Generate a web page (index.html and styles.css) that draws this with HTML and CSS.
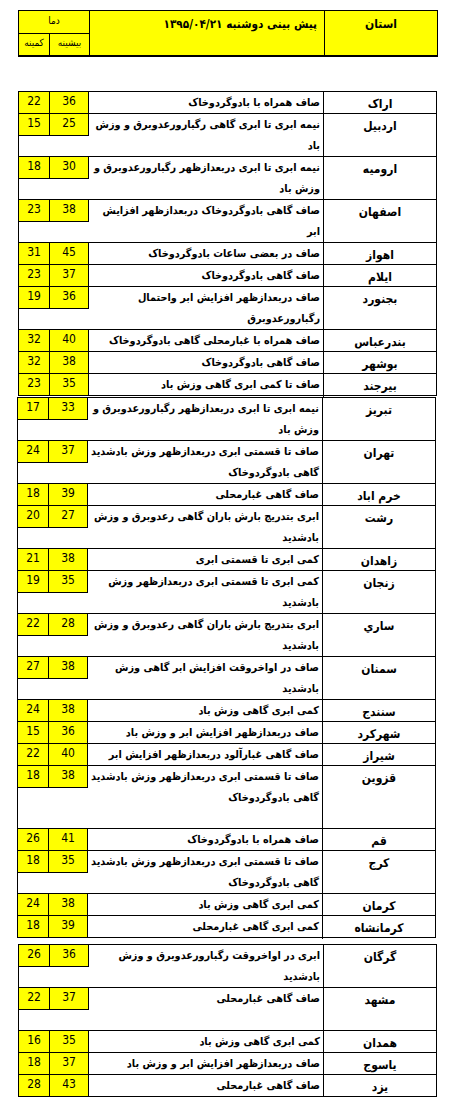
FILE: index.html
```html
<!DOCTYPE html>
<html lang="fa">
<head>
<meta charset="utf-8">
<title>پیش بینی</title>
<link rel="stylesheet" href="styles.css">
</head>
<body>
<div class="page">
  <div class="head">
    <div class="h-prov">استان</div>
    <div class="h-desc">پیش بینی دوشنبه ۱۳۹۵/۰۴/۲۱</div>
    <div class="h-temp">
      <div class="h-dama">دما</div>
      <div class="h-sub"><div class="h-max">بیشینه</div><div class="h-min">کمینه</div></div>
    </div>
  </div>

  <div class="block blk-a">
    <div class="row r1"><div class="prov">اراک</div><div class="desc">صاف همراه با بادوگردوخاک</div><div class="t">36</div><div class="t">22</div></div>
    <div class="row r2"><div class="prov">اردبیل</div><div class="desc">نیمه ابری تا ابری گاهی رگبارورعدوبرق و وزش<br>باد</div><div class="t">25</div><div class="t">15</div></div>
    <div class="row r2"><div class="prov">ارومیه</div><div class="desc">نیمه ابری تا ابری دربعدازظهر رگبارورعدوبرق و<br>وزش باد</div><div class="t">30</div><div class="t">18</div></div>
    <div class="row r2"><div class="prov">اصفهان</div><div class="desc">صاف گاهی بادوگردوخاک دربعدازظهر افزایش<br>ابر</div><div class="t">38</div><div class="t">23</div></div>
    <div class="row r1"><div class="prov">اهواز</div><div class="desc">صاف در بعضی ساعات بادوگردوخاک</div><div class="t">45</div><div class="t">31</div></div>
    <div class="row r1"><div class="prov">ایلام</div><div class="desc">صاف گاهی بادوگردوخاک</div><div class="t">37</div><div class="t">23</div></div>
    <div class="row r2"><div class="prov">بجنورد</div><div class="desc">صاف دربعدازظهر افزایش ابر واحتمال<br>رگبارورعدوبرق</div><div class="t">36</div><div class="t">19</div></div>
    <div class="row r1"><div class="prov">بندرعباس</div><div class="desc">صاف همراه با غبارمحلی گاهی بادوگردوخاک</div><div class="t">40</div><div class="t">32</div></div>
    <div class="row r1"><div class="prov">بوشهر</div><div class="desc">صاف گاهی بادوگردوخاک</div><div class="t">38</div><div class="t">32</div></div>
    <div class="row r1"><div class="prov">بیرجند</div><div class="desc">صاف تا کمی ابری گاهی وزش باد</div><div class="t">35</div><div class="t">23</div></div>
  </div>

  <div class="block blk-b">
    <div class="row r2"><div class="prov">تبریز</div><div class="desc">نیمه ابری تا ابری دربعدازظهر رگبارورعدوبرق و<br>وزش باد</div><div class="t">33</div><div class="t">17</div></div>
    <div class="row r2"><div class="prov">تهران</div><div class="desc">صاف تا قسمتی ابری دربعدازظهر وزش بادشدید<br>گاهی بادوگردوخاک</div><div class="t">37</div><div class="t">24</div></div>
    <div class="row r1"><div class="prov">خرم اباد</div><div class="desc">صاف گاهی غبارمحلی</div><div class="t">39</div><div class="t">18</div></div>
    <div class="row r2"><div class="prov">رشت</div><div class="desc">ابری بتدریج بارش باران گاهی رعدوبرق و وزش<br>بادشدید</div><div class="t">27</div><div class="t">20</div></div>
    <div class="row r1"><div class="prov">زاهدان</div><div class="desc">کمی ابری تا قسمتی ابری</div><div class="t">38</div><div class="t">21</div></div>
    <div class="row r2"><div class="prov">زنجان</div><div class="desc">کمی ابری تا قسمتی ابری دربعدازظهر وزش<br>بادشدید</div><div class="t">35</div><div class="t">19</div></div>
    <div class="row r2"><div class="prov">ساري</div><div class="desc">ابری بتدریج بارش باران گاهی رعدوبرق و وزش<br>بادشدید</div><div class="t">28</div><div class="t">22</div></div>
    <div class="row r2"><div class="prov">سمنان</div><div class="desc">صاف در اواخروقت افزایش ابر گاهی وزش<br>بادشدید</div><div class="t">38</div><div class="t">27</div></div>
    <div class="row r1"><div class="prov">سنندج</div><div class="desc">کمی ابری گاهی وزش باد</div><div class="t">38</div><div class="t">24</div></div>
    <div class="row r1"><div class="prov">شهرکرد</div><div class="desc">صاف دربعدازظهر افزایش ابر و وزش باد</div><div class="t">36</div><div class="t">15</div></div>
    <div class="row r1"><div class="prov">شیراز</div><div class="desc">صاف گاهی غبارآلود دربعدازظهر افزایش ابر</div><div class="t">40</div><div class="t">22</div></div>
    <div class="row r3"><div class="prov">قزوین</div><div class="desc">صاف تا قسمتی ابری دربعدازظهر وزش بادشدید<br>گاهی بادوگردوخاک</div><div class="t">38</div><div class="t">18</div></div>
    <div class="row r1"><div class="prov">قم</div><div class="desc">صاف همراه با بادوگردوخاک</div><div class="t">41</div><div class="t">26</div></div>
    <div class="row r2"><div class="prov">کرج</div><div class="desc">صاف تا قسمتی ابری دربعدازظهر وزش بادشدید<br>گاهی بادوگردوخاک</div><div class="t">35</div><div class="t">18</div></div>
    <div class="row r1"><div class="prov">کرمان</div><div class="desc">کمی ابری گاهی وزش باد</div><div class="t">38</div><div class="t">24</div></div>
    <div class="row r1"><div class="prov">کرمانشاه</div><div class="desc">کمی ابری گاهی غبارمحلی</div><div class="t">39</div><div class="t">18</div></div>
  </div>

  <div class="block blk-c">
    <div class="row r2"><div class="prov">گرگان</div><div class="desc">ابری در اواخروقت رگبارورعدوبرق و وزش<br>بادشدید</div><div class="t">36</div><div class="t">26</div></div>
    <div class="row r2"><div class="prov">مشهد</div><div class="desc">صاف گاهی غبارمحلی</div><div class="t">37</div><div class="t">22</div></div>
    <div class="row r1"><div class="prov">همدان</div><div class="desc">کمی ابری گاهی وزش باد</div><div class="t">35</div><div class="t">16</div></div>
    <div class="row r1"><div class="prov">یاسوج</div><div class="desc">صاف دربعدازظهر افزایش ابر و وزش باد</div><div class="t">37</div><div class="t">18</div></div>
    <div class="row r1"><div class="prov">یزد</div><div class="desc">صاف گاهی غبارمحلی</div><div class="t">43</div><div class="t">28</div></div>
  </div>
</div>
</body>
</html>
```

FILE: styles.css
```css
* {
  box-sizing: border-box;
  margin: 0;
  padding: 0;
}

html, body {
  background: #ffffff;
}

body {
  font-family: "DejaVu Sans Condensed", "DejaVu Sans", sans-serif;
  color: #000000;
}

.page {
  padding-top: 10px;
  width: 450px;
}

/* ---------- header ---------- */
.head {
  width: 420px;
  margin-left: 18px;
  height: 47px;
  border: 1px solid #000;
  border-bottom: 2px solid #000;
  background: #ffff00;
  direction: rtl;
  display: grid;
  grid-template-columns: 112px 236px 70px;
}

.h-prov {
  text-align: center;
  font-weight: bold;
  font-size: 12px;
  line-height: 22px;
  padding-top: 2px;
}

.h-desc {
  border-right: 1px solid #000;
  border-left: 1px solid #000;
  text-align: right;
  padding-right: 7px;
  padding-top: 2px;
  font-weight: bold;
  font-size: 11.7px;
  line-height: 22px;
}

.h-temp {
  display: flex;
  flex-direction: column;
  font-size: 10px;
}

.h-dama {
  height: 23px;
  border-bottom: 1px solid #000;
  text-align: center;
  line-height: 19px;
}

.h-sub {
  flex: 1;
  display: flex;
}

.h-max {
  flex: 1;
  text-align: center;
  line-height: 18px;
  overflow: hidden;
  white-space: nowrap;
}

.h-min {
  width: 31px;
  border-right: 1px solid #000;
  text-align: center;
  line-height: 18px;
  white-space: nowrap;
  overflow: hidden;
}

/* ---------- data blocks ---------- */
.block {
  width: 419px;
  margin-left: 18px;
  border-left: 1px solid #000;
  border-right: 1px solid #000;
  border-bottom: 1px solid #000;
  direction: rtl;
}

.blk-a {
  margin-top: 34px;
}

.blk-b {
  margin-top: 1px;
  margin-left: 17px;
}

.blk-c {
  margin-top: 6px;
}

.row {
  display: grid;
  grid-template-columns: 113px 234px 39px 31px;
  border-top: 1px solid #000;
}

.r1 { height: 22px; }
.r2 { height: 43px; }
.r3 { height: 63px; }

.prov {
  border-left: 1px solid #000;
  text-align: center;
  font-weight: bold;
  font-size: 12px;
  line-height: 21px;
  padding-top: 2px;
}

.desc {
  text-align: right;
  padding-right: 3px;
  font-weight: bold;
  font-size: 10.8px;
  line-height: 21px;
  white-space: nowrap;
}

.t {
  align-self: start;
  height: 22px;
  margin-bottom: -1px;
  background: #ffff00;
  border-right: 1px solid #000;
  border-bottom: 1px solid #000;
  text-align: center;
  direction: ltr;
  font-size: 12px;
  line-height: 19px;
}
```
